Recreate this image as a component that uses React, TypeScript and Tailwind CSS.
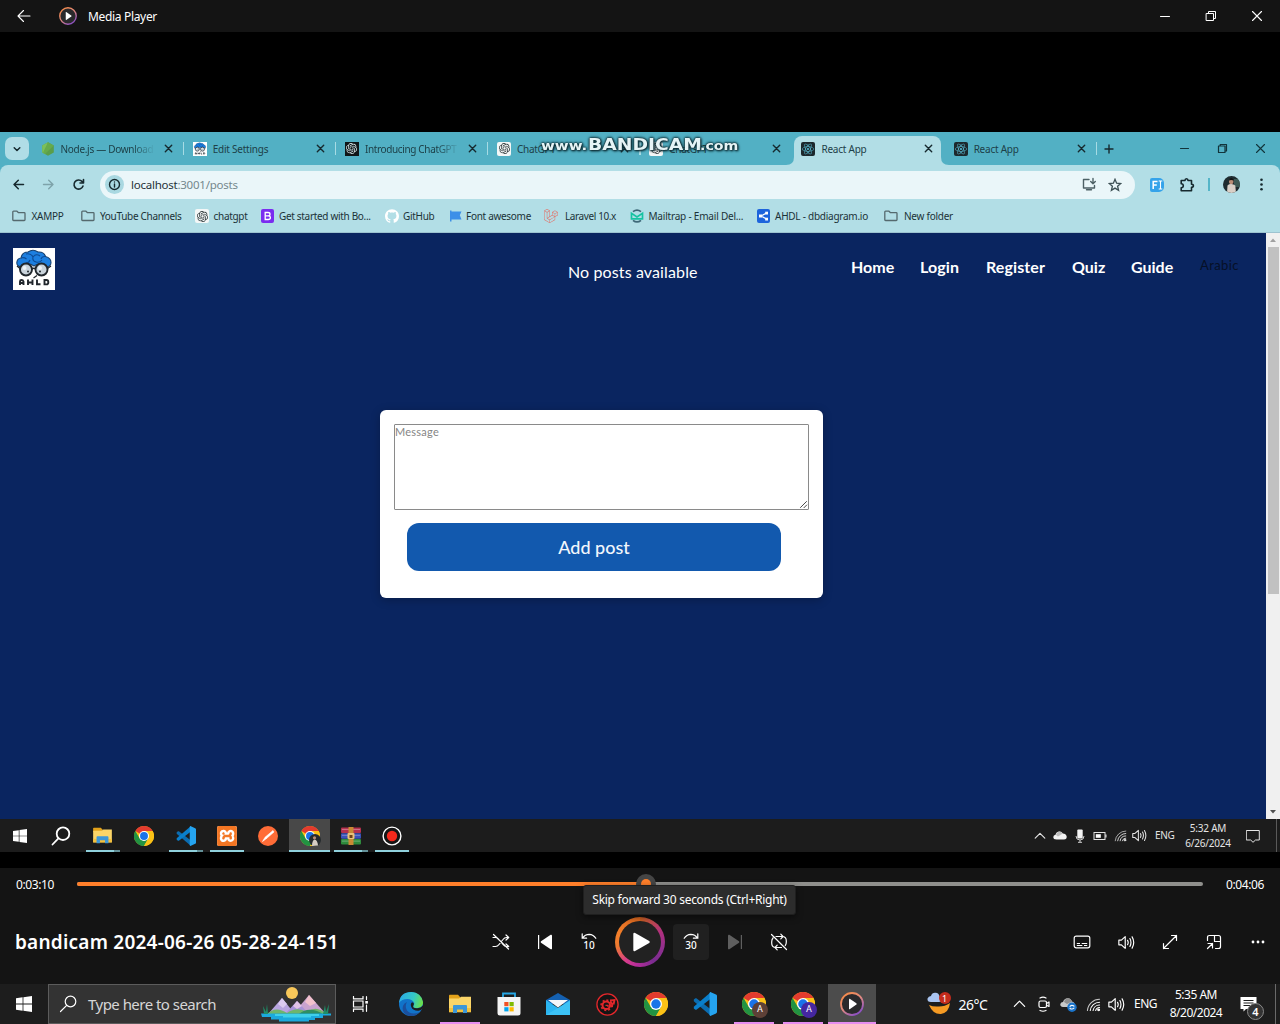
import React, { ReactNode } from "react";
import { SiOpenai, SiGithub, SiLaravel, SiReact, SiXampp } from "react-icons/si";

type Box = { className?: string };

/* ---------- shared glyphs ---------- */

const Stroke = ({
  className = "",
  box = 16,
  width = 1.1,
  children,
}: {
  className?: string;
  box?: number;
  width?: number;
  children: ReactNode;
}) => (
  <svg
    className={"block shrink-0 " + className}
    viewBox={`0 0 ${box} ${box}`}
    fill="none"
    stroke="currentColor"
    strokeWidth={width}
    strokeLinecap="round"
    strokeLinejoin="round"
  >
    {children}
  </svg>
);

const Windows = ({ className = "" }: Box) => (
  <svg className={"block shrink-0 " + className} viewBox="0 0 16 16" fill="#fff">
    <path d="M0 2.2 6.6 1.3V7.6H0zM7.4 1.2 16 0v7.6H7.4zM0 8.4h6.6v6.3L0 13.8zM7.4 8.4H16V16l-8.6-1.2z" />
  </svg>
);

const Chrome = ({ className = "" }: Box) => (
  <svg className={"block shrink-0 " + className} viewBox="0 0 48 48">
    <circle cx="24" cy="24" r="24" fill="#fbc116" />
    <path d="M24 24 3.2 12A24 24 0 0 1 44.8 12L34.4 24z" fill="#e33b2e" />
    <path d="M3.2 12A24 24 0 0 0 24 48L34.4 30 13.6 30z" fill="#229342" />
    <path d="M44.8 12H24V24L34.4 30 24 48A24 24 0 0 0 44.8 12z" fill="#fbc116" />
    <circle cx="24" cy="24" r="12" fill="#fff" />
    <circle cx="24" cy="24" r="9.5" fill="#1a73e8" />
  </svg>
);

const VSCode = ({ className = "" }: Box) => (
  <svg className={"block shrink-0 " + className} viewBox="0 0 24 24">
    <path d="M.8 7.6 2.4 6.2 3.4 6.3 18 17.4V24L.8 9.2z" fill="#0b6cb0" />
    <path d="M.8 16.4 2.4 17.8 3.4 17.7 18 6.6V0L.8 14.8z" fill="#0a7fcb" />
    <path d="M17.3 0 23 2.6Q24 3 24 4V20Q24 21 23 21.4L17.3 24 16.5 23V1z" fill="#25a4f0" />
  </svg>
);

const Explorer = ({ className = "" }: Box) => (
  <svg className={"block shrink-0 " + className} viewBox="0 0 22 20">
    <path d="M0 1.5Q0 .8.8.8H9L11 3V6H0z" fill="#e3a21a" />
    <path d="M0 4.5H10L12 2.8H22V18H0z" fill="#fbd568" />
    <path d="M0 14H22V18.3H0z" fill="#f5c13c" />
    <path d="M4 19V12Q4 11 5 11H17Q18 11 18 12V19H14V15.5H8V19z" fill="#3d97d8" />
  </svg>
);

const Wifi = ({ className = "" }: Box) => (
  <Stroke className={className} width={1.1}>
    <path d="M1.5 14.5A13 13 0 0 1 14.5 2.5" opacity=".75" />
    <path d="M4.5 14.5A10 10 0 0 1 14.5 5.5" />
    <path d="M7.5 14.5A7 7 0 0 1 14.5 8.5" />
    <path d="M10.3 14.5A4.2 4.2 0 0 1 14.5 11.2" />
    <circle cx="13.5" cy="13.7" r="1" fill="currentColor" />
  </Stroke>
);

const Volume = ({ className = "" }: Box) => (
  <Stroke className={className} width={1.1}>
    <path d="M.8 5.8H3.2L6.8 2.5V13.5L3.2 10.2H.8z" />
    <path d="M9 6Q10.2 8 9 10M11.2 4.3Q13.2 8 11.2 11.7M13.3 2.7Q16.3 8 13.3 13.3" />
  </Stroke>
);

const ChevronUp = ({ className = "" }: Box) => (
  <Stroke className={className} width={1.3}>
    <path d="M2.5 10.5 8 5 13.5 10.5" />
  </Stroke>
);

const PlayBadge = ({ className = "" }: Box) => (
  <svg className={"block shrink-0 " + className} viewBox="0 0 24 24">
    <defs>
      <linearGradient id="ring" x1="0" y1="0" x2=".7" y2="1">
        <stop offset="0" stopColor="#f98a3c" />
        <stop offset=".55" stopColor="#e08a80" />
        <stop offset="1" stopColor="#8a4fc4" />
      </linearGradient>
    </defs>
    <circle cx="12" cy="12" r="11" fill="#2a2a2c" stroke="url(#ring)" strokeWidth="1.8" />
    <path d="M9 7.2Q9 6.5 9.7 6.8L16.4 11.3Q17 12 16.4 12.6L9.7 17.2Q9 17.5 9 16.8z" fill="#fff" />
  </svg>
);

/* ---------- media player title bar ---------- */

const TitleBar = () => (
  <header className="flex h-8 shrink-0 items-center bg-[#141414] text-white">
    <Stroke className="ml-[16px] h-4 w-4" width={1.1}>
      <path d="M2 8H14M7.5 2.5 2 8 7.5 13.5" />
    </Stroke>
    <PlayBadge className="ml-[27px] h-[18px] w-[18px]" />
    <span className="mt-px ml-[11px] text-[12px] tracking-[-0.33px] whitespace-nowrap">Media Player</span>
    <div className="ml-auto flex">
      <div className="flex w-[46px] justify-center"><Stroke className="h-3 w-3" box={12} width={1}><path d="M1.500 6.500H10.500" /></Stroke></div>
      <div className="flex w-[46px] justify-center">
        <Stroke className="h-3 w-3" box={12} width={1}><path d="M1.500 3.500H8.500V10.500H1.500zM3.500 3.500V1.500H10.500V8.500H8.500" strokeLinejoin="miter" /></Stroke>
      </div>
      <div className="flex w-[46px] justify-center"><Stroke className="h-3 w-3" box={12} width={1.1}><path d="M1.500 1.500 10.500 10.500M10.500 1.500 1.500 10.500" /></Stroke></div>
    </div>
  </header>
);

/* ---------- browser ---------- */

const AhldMark = ({ className = "" }: Box) => (
  <svg className={"block shrink-0 " + className} viewBox="0 0 42 42">
    <rect width="42" height="42" fill="#fff" />
    <path d="M8 19Q3 18 4 13.500 4.500 10.500 8 10 9 4 15 4 20 .5 25 4 31 3.500 32.500 8.500 38 10 38 14.500 38 18 34 19 28 13 21 18 14 13 8 19z" fill="#1d7fe0" stroke="#16406f" strokeWidth="1.100" />
    <path d="M8 10Q11 9 13.500 11M13 6Q18 5 20 9 23 5 27 8M20 9Q19 13 23 14 27 15 29 12M32.500 8.500Q29 8 28 11M13 15Q16 15 17 12" fill="none" stroke="#0d4c97" strokeWidth="1.100" />
    <circle cx="13" cy="21.500" r="6" fill="#c9d3db" stroke="#20262c" strokeWidth="1.900" />
    <circle cx="28.500" cy="21.500" r="6" fill="#c9d3db" stroke="#20262c" strokeWidth="1.900" />
    <circle cx="11.500" cy="20" r="2" fill="#eef3f6" />
    <circle cx="27" cy="20" r="2" fill="#eef3f6" />
    <circle cx="15" cy="23.500" r="1" fill="#20262c" />
    <circle cx="27" cy="23.500" r="1" fill="#20262c" />
    <path d="M19 21Q21 19.500 22.500 21M4 18 7 20.500M38 18 34.500 20.500M24 27.500 20.500 30" fill="none" stroke="#20262c" strokeWidth="1.300" />
    <path d="M7 37V33.500Q7 32 8.500 32T10.500 33.500V37M7 35H10.500M15 31.500V37M19.500 31.500V37M15 34.500H19.500M24 31.500V36.200H27.500M31.500 32H33.500Q35.300 32 35.300 34.200T33.500 36.400H31.500z" fill="none" stroke="#20262c" strokeWidth="1.900" />
  </svg>
);

const NodeHex = () => (
  <svg className="block h-[14px] w-[14px] shrink-0" viewBox="0 0 14 14">
    <path d="M7 .3 12.800 3.600V10.400L7 13.700 1.200 10.400V3.600z" fill="#5a9e4b" />
    <path d="M7 .3 1.200 3.600V10.400L4 12z" fill="#7cc05a" />
    <path d="M7 .3 12.800 3.600 4 12 2 10.500z" fill="#66ab4c" />
  </svg>
);

const OpenDark = () => (
  <span className="flex h-[14px] w-[14px] shrink-0 items-center justify-center bg-[#101618]"><SiOpenai className="h-[11px] w-[11px] text-[#dcebed]" /></span>
);
const OpenLight = () => (
  <span className="flex h-[14px] w-[14px] shrink-0 items-center justify-center rounded-[2px] bg-[#f3f7f7]"><SiOpenai className="h-[11px] w-[11px] text-[#2b3436]" /></span>
);
const ReactTile = () => (
  <span className="flex h-[14px] w-[14px] shrink-0 items-center justify-center rounded-[2px] bg-[#1d282d]"><SiReact className="h-[12px] w-[12px] text-[#56b8cf]" /></span>
);

const TabClose = () => (
  <Stroke className="h-[9px] w-[9px] text-[#16292e]" box={9} width={1.4}><path d="M1.300 1.300 7.700 7.700M7.700 1.300 1.300 7.700" /></Stroke>
);

const Tab = ({ icon, label, divider = true, active = false, faded = false, className = "" }: {
  icon: ReactNode; label: string; divider?: boolean; active?: boolean; faded?: boolean; className?: string;
}) => (
  <div className="flex h-full w-[152.2px] shrink-0 items-end">
    <div className={active
      ? "relative mx-[1.5px] flex h-[29px] w-[147px] items-center rounded-t-[8px] bg-[#b2dee6] pb-[4px] pl-[7px]"
      : "flex h-[29px] w-[150.5px] items-center pb-[4px] pl-[8.5px]"}>
      {active && (
        <>
          <svg className="absolute bottom-0 -left-2 h-2 w-2" viewBox="0 0 8 8"><path d="M8 0V8H0Q8 8 8 0z" fill="#b2dee6" /></svg>
          <svg className="absolute -right-2 bottom-0 h-2 w-2" viewBox="0 0 8 8"><path d="M0 0V8H8Q0 8 0 0z" fill="#b2dee6" /></svg>
        </>
      )}
      {icon}
      <span className={"ml-[6px] w-[94px] shrink-0 overflow-hidden text-[10px] leading-4 whitespace-nowrap text-[#1d4048] " +
        (faded ? "[mask-image:linear-gradient(to_right,#000_76%,transparent)] " : "") + className}>{label}</span>
      <span className="ml-[9px]"><TabClose /></span>
    </div>
    {divider && !active && <span className="mb-[10px] h-[13px] w-[1.5px] bg-[#a6dbe4]" />}
  </div>
);

const TabStrip = () => (
  <div className="relative flex h-[33px] shrink-0 bg-[#52b0c4]">
    <div className="mt-[5px] mr-[3px] ml-[5px] flex h-[23px] w-[24px] shrink-0 items-center justify-center rounded-[7px] bg-[#b0dde6]">
      <Stroke className="h-[8px] w-[8px] text-[#16292e]" box={8} width={1.5}><path d="M1.200 2.700 4 5.500 6.800 2.700" /></Stroke>
    </div>
    <Tab icon={<NodeHex />} label="Node.js — Download" faded className="tracking-[-0.3px]" />
    <Tab icon={<AhldMark className="h-[14px] w-[14px]" />} label="Edit Settings" className="tracking-[-0.23px]" />
    <Tab icon={<OpenDark />} label="Introducing ChatGPT" faded className="tracking-[-0.36px]" />
    <Tab icon={<OpenLight />} label="ChatGPT" className="tracking-[-0.3px]" />
    <Tab icon={<OpenLight />} label="ChatGPT" divider={false} className="tracking-[-0.3px]" />
    <Tab icon={<ReactTile />} label="React App" active className="tracking-[-0.24px]" />
    <Tab icon={<ReactTile />} label="React App" className="tracking-[-0.24px]" />
    <Stroke className="mt-[12px] ml-[7px] h-[10px] w-[10px] text-[#16292e]" box={10} width={1.4}><path d="M5 1V9M1 5H9" /></Stroke>
    <div className="mt-[11px] mr-[14px] ml-auto flex gap-[27px] text-[#12343b]">
      <Stroke className="h-[11px] w-[11px]" box={11} width={1.1}><path d="M1.500 5.500H9.500" /></Stroke>
      <Stroke className="h-[11px] w-[11px]" box={11} width={1.2}><path d="M1.500 3H8V9.500H1.500zM3.200 3V1.500H9.500V8H8" /></Stroke>
      <Stroke className="h-[11px] w-[11px]" box={11} width={1.1}><path d="M1.500 1.500 9.500 9.500M9.500 1.500 1.500 9.500" /></Stroke>
    </div>
    <div className="absolute top-[5px] left-[541px] flex items-baseline font-['DejaVu_Sans'] leading-4 font-bold text-[#e6f4f6] [text-shadow:0_0_2px_#103038,0_0_2px_#103038,0_0_3px_#103038,1px_1px_2px_#103038]">
      <span className="w-[47px] origin-left scale-x-[1.2] text-[12.5px]">www.</span>
      <span className="w-[112px] origin-left scale-x-[1.17] text-[16px]">BANDICAM</span>
      <span className="origin-left scale-x-[1.18] text-[12px]">.com</span>
    </div>
  </div>
);

const Toolbar = () => (
  <div className="shrink-0 bg-[#52b0c4]">
    <div className="flex h-[39px] items-center rounded-t-[8px] bg-[#b2dee6] text-[#16292e]">
      <Stroke className="ml-[12px] h-[13px] w-[13px]" box={13} width={1.5}><path d="M2 6.500H11.500M6.300 2.200 2 6.500 6.300 10.800" /></Stroke>
      <Stroke className="ml-[17px] h-[13px] w-[13px] text-[#7ea3aa]" box={13} width={1.4}><path d="M1.500 6.500H11M6.700 2.200 11 6.500 6.700 10.800" /></Stroke>
      <Stroke className="ml-[17px] h-[13px] w-[13px]" box={13} width={1.6}><path d="M11 8A4.600 4.600 0 1 1 10 3.400L11.300 4.700M11.500 1.500V5H8" /></Stroke>
      <div className="ml-[15px] flex h-[28px] w-[1035px] shrink-0 items-center rounded-full bg-[#eaf6f9]">
        <span className="ml-[5px] flex h-[19px] w-[19px] items-center justify-center rounded-full bg-[#a9d8e1]">
          <Stroke className="h-[13px] w-[13px]" box={13} width={1.4}><circle cx="6.500" cy="6.500" r="5" /><path d="M6.500 6V9M6.500 4V4.100" /></Stroke>
        </span>
        <span className="mt-px ml-[7px] text-[11.5px] tracking-[-0.24px] whitespace-nowrap text-[#74888d]"><span className="text-[#1f3237]">localhost</span>:3001/posts</span>
        <Stroke className="ml-auto h-[15px] w-[15px] text-[#4d6065]" box={15} width={1.4}><path d="M7 2.500H1.500V11H12.500V8.500M4.500 12.800H9.500M11 1.500V6.500M8.700 4.500 11 6.700 13.300 4.500" /></Stroke>
        <Stroke className="mr-[13px] ml-[11.5px] h-[14px] w-[14px] text-[#3d5055]" box={14} width={1.3}><path d="M7 1.300 8.600 5.200 12.700 5.500 9.600 8.200 10.600 12.300 7 10.100 3.400 12.300 4.400 8.200 1.300 5.500 5.400 5.200z" strokeLinejoin="miter" /></Stroke>
      </div>
      <span className="ml-[15px] flex h-[14px] w-[14px] items-center justify-center rounded-[2px] rounded-r-[5px] bg-[#35a3ea]">
        <svg className="block h-[10px] w-[11px]" viewBox="0 0 11 10" fill="none" stroke="#fff" strokeWidth="1.500"><path d="M1.200 9V1.500H5.500M1.200 5H4.800" /><path d="M6.700 1H10.300M8.500 1V9M6.700 9H10.300" strokeWidth="1.100" /></svg>
      </span>
      <Stroke className="ml-[15px] h-[16px] w-[16px]" width={1.6}><path d="M2.200 3.500H6Q6 1.800 7.500 1.800T9 3.500H12.500V7.200Q14.400 7.200 14.400 8.700T12.500 10.200V13.800H2.200V10.800Q4.300 10.500 4.300 8.700T2.200 6.700z" /></Stroke>
      <span className="ml-[13px] h-[13px] w-[1.5px] bg-[#55b5c8]" />
      <svg className="ml-[13.5px] block h-[17px] w-[17px] shrink-0" viewBox="0 0 17 17">
        <clipPath id="face"><circle cx="8.500" cy="8.500" r="8.500" /></clipPath>
        <g clipPath="url(#face)"><rect width="17" height="17" fill="#1f2c30" /><rect x="11" y="3" width="6" height="8" fill="#3d5a55" /><ellipse cx="8.200" cy="5.400" rx="2.200" ry="2.700" fill="#b98d76" /><path d="M5.900 4.500Q6 1.800 8.300 1.900T10.500 4.500Q8 3.300 5.900 4.500z" fill="#141414" /><path d="M4 17 4.500 9.500Q6 8 8.300 8.100T12.300 9.500L13 17z" fill="#d9cfc6" /></g>
      </svg>
      <svg className="ml-[18.5px] block h-[13px] w-[5px]" viewBox="0 0 5 13" fill="#16292e"><circle cx="2.500" cy="1.700" r="1.300" /><circle cx="2.500" cy="6.500" r="1.300" /><circle cx="2.500" cy="11.300" r="1.300" /></svg>
    </div>
  </div>
);

const Folder = () => (
  <Stroke className="h-[14px] w-[14px] text-[#55696e]" box={14} width={1.3}><path d="M.8 3Q.8 2.200 1.600 2.200H5L6.500 3.700H12.200Q13 3.700 13 4.500V10.700Q13 11.500 12.200 11.500H1.600Q.8 11.500.8 10.700z" /></Stroke>
);

const Bookmark = ({ icon, label, icw, w }: { icon: ReactNode; label: string; icw: string; w: string }) => (
  <div className={"flex shrink-0 items-center " + w}>
    <span className={"shrink-0 " + icw}>{icon}</span>
    <span className="text-[10px] leading-4 whitespace-nowrap">{label}</span>
  </div>
);

const Bookmarks = () => (
  <div className="flex h-[29px] shrink-0 items-center border-b border-[#9dc3d0] bg-[#b2dee6] pb-[4px] pl-[12px] text-[#1b3238]">
    <Bookmark w="w-[68.5px] tracking-[-0.28px]" icw="w-[19.5px]" icon={<Folder />} label="XAMPP" />
    <Bookmark w="w-[114.5px] tracking-[-0.31px]" icw="w-[19.5px]" icon={<Folder />} label="YouTube Channels" />
    <Bookmark w="w-[66px] tracking-[-0.3px]" icw="w-[18.5px]" icon={<OpenLight />} label="chatgpt" />
    <Bookmark w="w-[124px] tracking-[-0.32px]" icw="w-[18px]" icon={
      <svg className="block h-[14px] w-[13px]" viewBox="0 0 13 14"><rect width="13" height="14" rx="2" fill="#7a2cf0" /><path d="M4.200 3.500H7Q9 3.500 9 5.200T7 6.900H4.200zM4.200 6.900H7.200Q9.400 6.900 9.400 8.700T7.200 10.500H4.200z" fill="none" stroke="#fff" strokeWidth="1.300" /></svg>
    } label="Get started with Bo..." />
    <Bookmark w="w-[64.5px] tracking-[-0.29px]" icw="w-[18px]" icon={<SiGithub className="block h-[14px] w-[14px] text-white" />} label="GitHub" />
    <Bookmark w="w-[94.5px] tracking-[-0.3px]" icw="w-[16.5px]" icon={
      <svg className="block h-[12px] w-[12px]" viewBox="0 0 12 12" fill="#3d8fe8"><path d="M0 .5H1.500V1.500H11.500L9.800 5.200 11.500 9.500H1.500V11.500H0z" /></svg>
    } label="Font awesome" />
    <Bookmark w="w-[86px] tracking-[-0.39px]" icw="w-[21px]" icon={<SiLaravel className="block h-[14px] w-[14px] text-[#e8655a]" />} label="Laravel 10.x" />
    <Bookmark w="w-[127px] tracking-[-0.2px]" icw="w-[18.5px]" icon={
      <svg className="block h-[14px] w-[14px]" viewBox="0 0 14 14" fill="none" strokeWidth="1.700"><path d="M3 2.700Q7-.6 11 2.700M3 11.300Q7 14.600 11 11.300" stroke="#3e6878" /><path d="M1.500 4.300V9.800H12.500V4.300L7 8z" stroke="#17c3a2" /></svg>
    } label="Mailtrap - Email Del..." />
    <Bookmark w="w-[127px] tracking-[-0.25px]" icw="w-[18px]" icon={
      <svg className="block h-[14px] w-[13px]" viewBox="0 0 13 14"><rect width="13" height="14" rx="2" fill="#1d64dc" /><path d="M9.500 4 4 7 9.500 10" fill="none" stroke="#fff" strokeWidth="1.200" /><rect x="2" y="5.500" width="3" height="3" fill="#fff" /><rect x="8.200" y="2.700" width="2.800" height="2.800" fill="#fff" /><rect x="8.200" y="8.700" width="2.800" height="2.800" fill="#fff" /></svg>
    } label="AHDL - dbdiagram.io" />
    <Bookmark w="w-[80px] tracking-[-0.25px]" icw="w-[20px]" icon={<Folder />} label="New folder" />
  </div>
);

const PostsPage = () => (
  <div className="flex h-[586px] shrink-0">
    <div className="h-full w-[1266px] bg-[#0a2560] font-['Lato'] text-white">
      <div className="flex h-[177px] items-start">
        <div className="mt-[15px] ml-[13px]"><AhldMark className="h-[42px] w-[42px]" /></div>
        <p className="mt-[27px] ml-[513px] w-[130px] text-[16px] leading-6 tracking-[0.12px] whitespace-nowrap">No posts available</p>
        <nav className="mt-[22px] ml-[153px] flex text-[16px] leading-6 font-bold whitespace-nowrap">
          <span className="w-[69px]">Home</span>
          <span className="w-[66px] tracking-[0.09px]">Login</span>
          <span className="w-[86px] tracking-[0.09px]">Register</span>
          <span className="w-[59px]">Quiz</span>
          <span className="w-[69px]">Guide</span>
          <span className="-mt-[2px] text-[13px] font-normal tracking-[0.42px] text-[#061027]">Arabic</span>
        </nav>
      </div>
      <div className="ml-[380px] h-[188px] w-[443px] rounded-[6px] bg-white px-[14px] pt-[14px] shadow-[0_2px_10px_rgba(0,0,0,0.25)]">
        <div className="flex h-[86px] w-[415px] flex-col justify-between rounded-[1px] border border-[#8a8a8a]">
          <span className="-mt-px text-[11px] leading-[15px] tracking-[0.24px] text-[#858585]">Message</span>
          <Stroke className="h-[9px] w-[9px] self-end text-[#4a4a4a]" box={9} width={1}><path d="M1.500 7.500 7.500 1.500M5 7.700 7.700 5" /></Stroke>
        </div>
        <div className="mt-[13px] ml-[13px] flex h-[48px] w-[374px] items-center justify-center rounded-[12px] bg-[#1259ae] pt-px text-[18px] font-medium text-[#f2f7fc]">Add post</div>
      </div>
    </div>
    <div className="flex h-full w-[14px] flex-col items-center bg-[#f0f0f0]">
      <svg className="block h-[14px] w-[14px]" viewBox="0 0 14 14" fill="#a0a0a0"><path d="M7 5.500 10 9H4z" /></svg>
      <span className="h-[347px] w-[11px] bg-[#c1c1c1]" />
      <svg className="mt-auto block h-[14px] w-[14px]" viewBox="0 0 14 14" fill="#505050"><path d="M7 8.500 10 5H4z" /></svg>
    </div>
  </div>
);

const Slot = ({ children, line = false, active = false, tail = false }: { children?: ReactNode; line?: boolean; active?: boolean; tail?: boolean }) => (
  <div className={"relative flex h-full w-[41.3px] shrink-0 items-center justify-center " + (active ? "bg-[#484848]" : "")}>
    {children}
    {line && <span className={"absolute bottom-0 flex h-[2px] bg-[#8fd0dc] " + (active ? "w-full" : "w-[34px]")}>{tail && <span className="ml-auto h-full w-[6px] bg-[#649199]" />}</span>}
  </div>
);

const RecordedTaskbar = () => (
  <div className="flex h-[33px] shrink-0 items-center bg-[#1c1c1c] text-[#e4e4e4]">
    <div className="flex h-full">
      <Slot><Windows className="mr-px h-[14px] w-[14px]" /></Slot>
      <Slot><Stroke className="mr-[2px] h-[20px] w-[20px] text-white" box={20} width={1.8}><circle cx="12" cy="7.700" r="6.300" /><path d="M7.400 12.300 1.500 18.500" /></Stroke></Slot>
      <Slot line tail><Explorer className="mr-px h-[17px] w-[19px]" /></Slot>
      <Slot><Chrome className="mr-px h-[20px] w-[20px]" /></Slot>
      <Slot line tail><VSCode className="h-[20px] w-[20px]" /></Slot>
      <Slot line><span className="flex h-[20px] w-[20px] items-center justify-center rounded-[2px] bg-white"><SiXampp className="h-[20px] w-[20px] text-[#f37623]" /></span></Slot>
      <Slot>
        <svg className="mr-px block h-[20px] w-[20px]" viewBox="0 0 20 20"><circle cx="10" cy="10" r="10" fill="#ff6c37" /><path d="M15 4.500 16 6 8.500 12.500 7 11.300zM7 11.300 8.500 12.500 4.500 15.500z" fill="#fff" stroke="#fff" strokeWidth=".6" /></svg>
      </Slot>
      <Slot line active>
        <Chrome className="h-[20px] w-[20px]" />
        <svg className="absolute top-[15px] left-[20px] h-[12px] w-[12px]" viewBox="0 0 12 12"><circle cx="6" cy="6" r="6" fill="#262b2e" /><path d="M3 12Q3 6.500 5.500 5.500 8.500 6 9 11.500z" fill="#d6cdc4" /><circle cx="5.500" cy="3.800" r="1.600" fill="#b98d76" /></svg>
      </Slot>
      <Slot line tail>
        <svg className="block h-[18px] w-[20px]" viewBox="0 0 20 18">
          <rect y=".5" width="20" height="5.500" rx="1" fill="#b5314f" /><rect y="6.300" width="20" height="5.500" rx="1" fill="#3a52b8" /><rect y="12.100" width="20" height="5.500" rx="1" fill="#2e8a3c" />
          <path d="M1 2.500H19M1 8.300H19M1 14.100H19" stroke="#ffffff" strokeOpacity=".3" /><rect x="7.500" width="5" height="18" fill="#c98a35" /><rect x="6.500" y="6" width="7" height="6" rx="1" fill="#e9c27b" /><rect x="8.500" y="8" width="3" height="3" fill="#6b4218" />
        </svg>
      </Slot>
      <Slot line><svg className="block h-[20px] w-[20px]" viewBox="0 0 20 20"><circle cx="10" cy="10" r="8.900" fill="#151515" stroke="#fff" strokeWidth="1.400" /><circle cx="10" cy="10" r="5.200" fill="#f4291c" /></svg></Slot>
    </div>
    <div className="ml-auto flex h-full items-center">
      <ChevronUp className="h-[14px] w-[14px]" />
      <svg className="ml-[6px] block h-[9px] w-[14px]" viewBox="0 0 14 9"><path d="M3.500 8.500Q.3 8.500.3 6 .4 4 2.500 3.700 3.500.5 6.500.5 8.700.5 9.800 2.500 13 2.500 13.700 5.500 13.900 8.500 11 8.500z" fill="#f2f2f2" /><path d="M3 4Q4 .5 6.500.5 8.700.5 9.800 2.500L5 5.500z" fill="#bdbdbd" /></svg>
      <svg className="ml-[7.5px] block h-[14px] w-[10px]" viewBox="0 0 10 14"><rect x="2.300" y=".5" width="5.400" height="9" rx="1" fill="#f4f4f4" /><path d="M1 7Q1 11 5 11T9 7M5 11V13.300M3 13.300H7" fill="none" stroke="#cfcfcf" /></svg>
      <svg className="ml-[8.5px] block h-[10px] w-[14px]" viewBox="0 0 14 10"><rect x="1" y="1.500" width="11" height="7" fill="none" stroke="#e4e4e4" /><rect x="2.800" y="3.200" width="5" height="3.600" fill="#fff" /><rect x="12.300" y="3.500" width="1.200" height="3" fill="#e4e4e4" /></svg>
      <Wifi className="ml-[7px] h-[13px] w-[13px]" />
      <Volume className="ml-[5px] h-[15px] w-[15px]" />
      <span className="ml-[8px] w-[20px] text-[10px] tracking-[-0.32px]">ENG</span>
      <div className="ml-[8px] w-[50px] text-center text-[10px] leading-[14.5px] tracking-[-0.22px] whitespace-nowrap">5:32 AM<br />6/26/2024</div>
      <Stroke className="ml-[13px] h-[14px] w-[14px]" box={14} width={1}><path d="M.7 1.500H13.300V11H9.500L7 13.300 4.700 11H.7z" strokeLinejoin="miter" /></Stroke>
      <span className="mr-[3px] ml-[16px] h-full w-px bg-[#5a5a5a]" />
    </div>
  </div>
);

/* ---------- transport controls ---------- */

const Control = ({ children, hover = false }: { children: ReactNode; hover?: boolean }) => (
  <div className={"flex h-9 w-9 shrink-0 items-center justify-center rounded-[4px] " + (hover ? "bg-[#202020]" : "")}>{children}</div>
);

const Transport = () => (
  <section className="relative h-[116px] shrink-0 bg-[#141414] text-white">
    <div className="flex h-[32px] items-center text-[12px] whitespace-nowrap">
      <span className="mt-px ml-[16px] w-[61px] tracking-[-0.4px]">0:03:10</span>
      <div className="relative flex h-[4px] w-[1126px] shrink-0 rounded-full bg-[#8f8f8c]">
        <span className="h-full w-[569px] rounded-l-full bg-[#ff7f2a]" />
        <span className="absolute -top-[8px] left-[559px] flex h-[20px] w-[20px] items-center justify-center rounded-full bg-[#454545]">
          <span className="h-[10px] w-[10px] rounded-full bg-[#ff7f2a]" />
        </span>
      </div>
      <span className="mt-px ml-[23px] tracking-[-0.4px]">0:04:06</span>
    </div>
    <div className="flex h-[84px] items-center pb-[0px]">
      <h1 className="ml-[15px] w-[468px] text-[19px] leading-6 font-semibold tracking-[0.23px] whitespace-nowrap">bandicam 2024-06-26 05-28-24-151</h1>
      <div className="flex items-center">
        <div className="flex gap-[8px]">
          <Control>
            <Stroke className="h-[18px] w-[18px]" box={18} width={1.2}><path d="M1.500 1.500 16.500 16M1 13.500H3.500Q5.500 13.500 7 11.500L11 6.500Q12.500 4.500 14.500 4.500H16.500M14 2 16.700 4.500 14 7M1 4.500H3.500Q5.500 4.500 7 6.500L11 11.500Q12.500 13.500 14.500 13.500H16.500M16.700 13.500 14 11" /></Stroke>
          </Control>
          <Control>
            <svg className="block h-[16px] w-[16px]" viewBox="0 0 16 16" fill="#fff"><rect x="1" y="1" width="1.200" height="14" /><path d="M4 7.300 13.700.8Q15 .4 15 1.600V14.400Q15 15.600 13.700 15.200L4 8.700Q3.300 8 4 7.300z" /></svg>
          </Control>
          <Control>
            <div className="flex flex-col items-center">
              <svg className="block h-[7px] w-[16px]" viewBox="0 0 16 7" fill="none" stroke="#fff" strokeWidth="1.200" strokeLinecap="round"><path d="M1.200.8V5.200H5.600M1.500 5Q4 1.300 8.200 1.300 12.500 1.500 14.800 5.300" /></svg>
              <span className="text-[10px] leading-[11px] font-medium">10</span>
            </div>
          </Control>
        </div>
        <div className="mx-[8px] flex h-[50px] w-[50px] items-center justify-center rounded-full bg-[conic-gradient(from_0deg,#c9601f,#b0307f_18%,#8f2f8f_30%,#7a2c90_40%,#b52d9a_52%,#d63c8c_60%,#ee7a30_72%,#f4802b_80%,#d9661f)]">
          <div className="flex h-[42px] w-[42px] items-center justify-center rounded-full bg-[#222222]">
            <svg className="ml-[2px] block h-[20px] w-[19px]" viewBox="0 0 20 22" fill="#fff"><path d="M1 2.200Q1 .2 3 1L18.500 10Q19.800 11 18.500 12L3 21Q1 21.800 1 19.800z" /></svg>
          </div>
        </div>
        <div className="flex gap-[8px]">
          <Control hover>
            <div className="flex flex-col items-center">
              <svg className="block h-[7px] w-[16px]" viewBox="0 0 16 7" fill="none" stroke="#fff" strokeWidth="1.200" strokeLinecap="round"><path d="M14.800.8V5.200H10.400M14.500 5Q12 1.300 7.800 1.300 3.500 1.500 1.200 5.300" /></svg>
              <span className="text-[10px] leading-[11px] font-medium">30</span>
            </div>
          </Control>
          <Control>
            <svg className="block h-[16px] w-[16px]" viewBox="0 0 16 16" fill="#5f5f5f"><rect x="13.800" y="1" width="1.200" height="14" /><path d="M12 7.300 2.300.8Q1 .4 1 1.600V14.400Q1 15.600 2.300 15.200L12 8.700Q12.700 8 12 7.300z" /></svg>
          </Control>
          <Control>
            <Stroke className="h-[18px] w-[18px]" box={18} width={1.2}><path d="M1.500 1.500 16.500 16.500M6 3.500H13Q16.300 4 16.300 8V9Q16.300 11 15.300 12.500M10.800 1.200 13 3.500 10.800 5.800M11.500 14.500H5Q1.700 14 1.700 10V9Q1.700 6.500 3 5M7.200 12.200 5 14.500 7.200 16.800" /></Stroke>
          </Control>
        </div>
      </div>
      <div className="mr-[4px] ml-auto flex items-center gap-[8px]">
        <Control><Stroke className="h-[18px] w-[18px]" box={18} width={1.2}><rect x="1.200" y="3.200" width="15.600" height="11.600" rx="2" /><path d="M3.800 10.500H7M8.700 10.500H14.200M3.800 12.500H9.300M11 12.500H14.200" strokeLinecap="butt" /></Stroke></Control>
        <Control><Volume className="h-[17px] w-[17px]" /></Control>
        <Control><Stroke className="h-[16px] w-[16px]" width={1.2}><path d="M1.500 14.500 14.500 1.500M9.500 1.500H14.500V6.500M1.500 9.500V14.500H6.500" strokeLinejoin="miter" /></Stroke></Control>
        <Control><Stroke className="h-[16px] w-[16px]" width={1.2}><path d="M1.500 6.500V3.500Q1.500 1.500 3.500 1.500H12.500Q14.500 1.500 14.500 3.500V12.500Q14.500 14.500 12.500 14.500H9.500M8.500 1.500V7.500H14.500M1.500 14.500 6.500 9.500M2 9.500H6.500V14" /></Stroke></Control>
        <Control><svg className="block h-[4px] w-[14px]" viewBox="0 0 14 4" fill="#fff"><circle cx="2" cy="2" r="1.400" /><circle cx="7" cy="2" r="1.400" /><circle cx="12" cy="2" r="1.400" /></svg></Control>
      </div>
    </div>
    <div className="absolute top-[17px] left-[583px] flex h-[30px] w-[213px] items-center justify-center rounded-[3px] border border-[#1f1f1f] bg-[#2c2c2c] text-[12px] tracking-[-0.27px] whitespace-nowrap shadow-[0_2px_6px_rgba(0,0,0,0.5)]">
      Skip forward 30 seconds (Ctrl+Right)
    </div>
  </section>
);

/* ---------- desktop taskbar ---------- */

const App48 = ({ children, line = false, active = false }: { children: ReactNode; line?: boolean; active?: boolean }) => (
  <div className={"relative flex h-full w-[48px] items-center justify-center " + (active ? "bg-[#4c4c4c]" : "")}>
    {children}
    {line && <span className={"absolute bottom-0 h-[2px] bg-[#e58df0] " + (active ? "w-full" : "w-[40px]")} />}
  </div>
);

const ProfileBadge = ({ className = "" }: Box) => (
  <span className={"absolute top-[18px] left-[22px] flex h-[16px] w-[16px] items-center justify-center rounded-full font-['Roboto'] text-[9px] text-white " + className}>A</span>
);

const Landscape = () => (
  <svg className="ml-auto block h-[36px] w-[70px]" viewBox="0 0 70 36">
    <circle cx="31" cy="7" r="6" fill="#f9c85a" />
    <path d="M8 27 21 12 33 27z" fill="#b9a5e0" /><path d="M21 12 26 18 22 22 17 18z" fill="#dccbf0" />
    <path d="M33 27 48 9 64 27z" fill="#c9a3cf" /><path d="M48 9 55 17 49 20 44 16z" fill="#f2c1cc" />
    <path d="M24 28 36 15 48 28z" fill="#a893d8" /><path d="M36 15 41 20 36 23 32 20z" fill="#e1c3e6" />
    <path d="M5 29Q14 19 26 27 36 20 46 26 56 18 66 29z" fill="#6fb56c" />
    <path d="M38 28Q48 19 64 29z" fill="#2f8f63" />
    <path d="M0 27.500H70V29.500H62V32H54V34H48V35.500H18V33.500H10V31H1z" fill="#1ba9dd" />
    <path d="M14 28H58V30H50V31.500H22V30H14z" fill="#3fd0ea" />
    <path d="M3 28 2 20 5 26 6 18 7 28M62 28 64 19 65 26 68 18 67 28" fill="#1f8d67" />
  </svg>
);

const Taskbar = () => (
  <footer className="flex h-10 shrink-0 items-center bg-[#1d1d1d] text-white">
    <Windows className="ml-[16px] h-4 w-4" />
    <div className="ml-[16px] flex h-10 w-[288px] shrink-0 items-center border border-[#5c5c5c] bg-[#333333] pr-[4px]">
      <Stroke className="ml-[10px] h-[18px] w-[18px]" box={18} width={1.2}><circle cx="11.500" cy="6.500" r="5.300" /><path d="M7.700 10.300 1.500 16.500" /></Stroke>
      <span className="ml-[11px] text-[15px] tracking-[-0.53px] whitespace-nowrap text-[#d6d6d6]">Type here to search</span>
      <Landscape />
    </div>
    <Stroke className="ml-[16px] h-[16px] w-[17px]" width={1.2}><path d="M1 .5V2.800H10.500V.5M1 15.500V13.200H10.500V15.500M1 5H10.500V11H1zM14 .7V3.500M14 9V15.300" strokeLinejoin="miter" /><rect x="12.800" y="5" width="2.600" height="2.600" fill="currentColor" stroke="none" /></Stroke>
    <div className="ml-[18px] flex h-full gap-[1px]">
      <App48>
        <svg className="block h-[24px] w-[24px]" viewBox="0 0 24 24">
          <defs>
            <linearGradient id="edgeTop" x1="0" y1=".3" x2="1" y2=".5"><stop offset="0" stopColor="#2aa9e8" /><stop offset=".6" stopColor="#35c9c4" /><stop offset="1" stopColor="#6be04a" /></linearGradient>
          </defs>
          <circle cx="12" cy="12" r="12" fill="#1173c9" />
          <path d="M0 11Q1 0 12.500 0 22 .5 24 10 24.300 15.500 18.500 16 14 16 14.200 14 15.700 12.500 15 10.500 13 7 8.500 7 2.500 7 0 11z" fill="url(#edgeTop)" />
          <path d="M8 10Q5.500 14 8 18.500 12 23.500 20.500 20.300 17 24.500 11 24 2 22 4 14 5 11 8 10z" fill="#1b4f9c" />
          <path d="M14.200 14Q13.500 16.500 18.500 16.200 22 16 24 13.500L24 16Q22 18.500 19.500 18.800 14 19 12.300 15 11 12 13 10.300 16 11 14.200 14z" fill="#1d1d1d" />
        </svg>
      </App48>
      <App48 line><Explorer className="h-[20px] w-[22px]" /></App48>
      <App48>
        <svg className="block h-[24px] w-[24px]" viewBox="0 0 24 24"><path d="M6 6V1.500H18V6" fill="none" stroke="#27a8e6" strokeWidth="1.800" /><path d="M.5 5H23.500V21Q23.500 23.500 21 23.500H3Q.5 23.500.5 21z" fill="#f4f4f4" /><rect x="7.300" y="10" width="4.200" height="4.200" fill="#f25022" /><rect x="12.500" y="10" width="4.200" height="4.200" fill="#7fba00" /><rect x="7.300" y="15.200" width="4.200" height="4.200" fill="#00a4ef" /><rect x="12.500" y="15.200" width="4.200" height="4.200" fill="#ffb900" /></svg>
      </App48>
      <App48>
        <svg className="block h-[24px] w-[24px]" viewBox="0 0 24 24"><path d="M0 8 12 1 24 8V12H0z" fill="#1460b0" /><path d="M0 8 12 16 24 8V23H0z" fill="#2bb5f0" /><path d="M2 8H22L12 15.500z" fill="#f5f7f9" /><path d="M0 23 24 9V23z" fill="#45c8f7" opacity=".7" /></svg>
      </App48>
      <App48>
        <svg className="block h-[23px] w-[23px]" viewBox="0 0 23 23" fill="none" stroke="#e3272b"><circle cx="11.500" cy="11.500" r="10.600" fill="#151515" strokeWidth="1.300" /><circle cx="10.300" cy="12.300" r="3.800" strokeWidth="2" /><circle cx="10.300" cy="12.300" r="5.200" strokeWidth="1.600" strokeDasharray="2 2" /><path d="M14 7.500 18.500 7 17.500 11.500M14 9Q17 10 16 14" strokeWidth="1.900" /><path d="M9.500 12.300H12V14" strokeWidth="1.300" /></svg>
      </App48>
      <App48><Chrome className="h-[24px] w-[24px]" /></App48>
      <App48><VSCode className="h-[24px] w-[24px]" /></App48>
      <App48 line><Chrome className="h-[24px] w-[24px]" /><ProfileBadge className="bg-[#5d4037]" /></App48>
      <App48 line><Chrome className="h-[24px] w-[24px]" /><ProfileBadge className="bg-[#4527a0]" /></App48>
      <App48 line active><PlayBadge className="h-[24px] w-[24px]" /></App48>
    </div>
    <div className="ml-auto flex h-full items-center">
      <div className="relative">
        <svg className="block h-[24px] w-[24px]" viewBox="0 0 24 24"><path d="M2 13Q6 22.500 14 22 22 20.500 23 11 18 14.500 12 14.500 6 15 2 13z" fill="#f59a23" /><path d="M4 10Q0 10 .5 6.500 1.500 4 4 4 5 .5 8.500.8 12 1 12.500 4.500 15.500 5 15 8 14.500 10 12 10z" fill="#a9c4f0" /></svg>
        <span className="absolute top-0 left-[12px] flex h-[12px] w-[12px] items-center justify-center rounded-full bg-[#c42b1c] text-[9px] leading-none text-white">1</span>
      </div>
      <span className="ml-[8px] w-[30px] text-[14px] tracking-[-0.47px] whitespace-nowrap">26°C</span>
      <ChevronUp className="ml-[23.5px] h-[16px] w-[15px]" />
      <Stroke className="ml-[9px] h-[16px] w-[16px]" width={1.2}><rect x="3" y="5" width="7.500" height="6.500" rx="1.500" /><path d="M10.500 7.500 13 6V10.500L10.500 9.200M4 2Q7 .3 10 2M4 14.500Q7 16 10 14.500" /></Stroke>
      <svg className="ml-[8px] block h-[16px] w-[17px]" viewBox="0 0 17 16"><path d="M3 11Q0 10.500.3 8 1 6 3 6 4.500 2 8 2.300 11 2.500 12 5.500 15 6 14.500 9L12 11z" fill="#c9c9c9" /><path d="M4 6Q5.500 2 8 2.300 11 2.500 12 5.500L7 8z" fill="#8f8f8f" /><circle cx="12" cy="11.200" r="4.700" fill="#1a73c9" /><path d="M9.700 10.700Q11 8.700 13.500 9.700L14.300 10.500M14.300 11.800Q13 13.700 10.500 12.700L9.700 12" fill="none" stroke="#fff" strokeWidth="1.100" /></svg>
      <Wifi className="ml-[9px] h-[15px] w-[15px]" />
      <Volume className="ml-[7px] h-[17px] w-[17px]" />
      <span className="ml-[9px] w-[24px] text-[12px] tracking-[-0.5px]">ENG</span>
      <div className="ml-[11px] w-[54px] text-center text-[12px] leading-[18px] tracking-[-0.5px] whitespace-nowrap">5:35 AM<br />8/20/2024</div>
      <div className="relative ml-[17px]">
        <svg className="block h-[17px] w-[17px]" viewBox="0 0 17 17"><path d="M.5 1H16.500V13H6L3.500 15.500V13H.5z" fill="#fff" /><path d="M3.500 4.500H13.500M3.500 7H13.500M3.500 9.500H10" stroke="#1d1d1d" strokeWidth="1.100" /></svg>
        <span className="absolute top-[7px] left-[7px] flex h-[17px] w-[17px] items-center justify-center rounded-full border border-[#8a8a8a] bg-[#333333] text-[11px] leading-none font-semibold">4</span>
      </div>
      <span className="mr-[4px] ml-[18px] h-full w-px bg-[#6a6a6a]" />
    </div>
  </footer>
);

export default function App() {
  return (
    <div className="flex h-[1024px] w-[1280px] flex-col overflow-hidden bg-black font-['Noto_Sans',sans-serif]">
      <TitleBar />
      <main className="mt-[100px] mb-[16px] flex h-[720px] shrink-0 flex-col overflow-hidden">
        <TabStrip />
        <Toolbar />
        <Bookmarks />
        <PostsPage />
        <RecordedTaskbar />
      </main>
      <Transport />
      <Taskbar />
    </div>
  );
}
